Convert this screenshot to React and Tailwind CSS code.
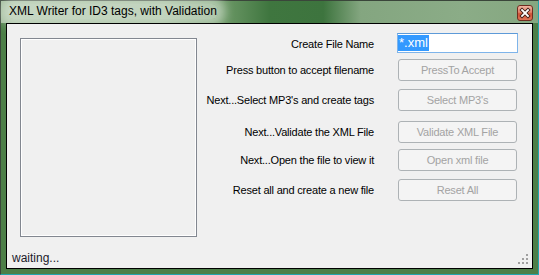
export default function App() {
  const rows = [
    { label: "Press button to accept filename", btn: "PressTo Accept", mt: "mt-[6px]" },
    { label: "Next...Select MP3's and create tags", btn: "Select MP3's", mt: "mt-[8px]" },
    { label: "Next...Validate the XML File", btn: "Validate XML File", mt: "mt-[10px]" },
    { label: "Next...Open the file to view it", btn: "Open xml file", mt: "mt-[6px]" },
    { label: "Reset all and create a new file", btn: "Reset All", mt: "mt-[8px]" },
  ];
  return (
    <div className="w-[539px] h-[275px] flex flex-col bg-[#4d7f48] border border-t-[#3a463a] border-l-[#3a463a] border-r-[#22a4ae] border-b-[#22a4ae] font-['Liberation_Sans',Arial,sans-serif]">
      <div className="h-[22px] flex items-start justify-between pl-[7px] pr-[5px] bg-[linear-gradient(to_right,#a3bd9d_0%,#98b592_30%,#6f9a69_41%,#3f763f_50%,#3d743e_60%,#84a680_67%,#8bac87_86%,#85a780_100%)]">
        <span className="mt-[3px] text-[12px] leading-[15px] text-black px-[1px] bg-[rgba(228,236,226,0.55)] shadow-[0_0_10px_7px_rgba(228,236,226,0.55)] rounded-[6px]">
          XML Writer for ID3 tags, with Validation
        </span>
        <svg width="16" height="16" viewBox="0 0 16 16" className="mt-[4px]">
          <defs>
            <linearGradient id="cg" x1="0" y1="0" x2="0" y2="1">
              <stop offset="0" stopColor="#f0b9a6" />
              <stop offset="0.45" stopColor="#e08068" />
              <stop offset="0.55" stopColor="#cf5234" />
              <stop offset="1" stopColor="#e0765a" />
            </linearGradient>
          </defs>
          <rect x="0.5" y="0.5" width="15" height="15" rx="2.5" fill="url(#cg)" stroke="#6e2d20" />
          <path d="M5 5 L11 11 M11 5 L5 11" stroke="#3a1a14" strokeWidth="3.6" strokeLinecap="square" />
          <path d="M5 5 L11 11 M11 5 L5 11" stroke="#ffffff" strokeWidth="1.8" strokeLinecap="square" />
        </svg>
      </div>
      <div className="flex-1 px-[5px] pb-[5px] flex">
        <div className="flex-1 border border-black bg-[#f0f0f0] flex flex-col">
          <div className="flex flex-1">
            <div className="ml-[13px] mt-[14px] w-[177px] h-[199px] border border-[#828790] shadow-[inset_0_0_0_1px_#ffffff] bg-[#f0f0f0]" />
            <div className="flex flex-col">
              <div className="mt-[9px] h-[20px] flex items-center">
                <div className="w-[177px] text-right text-[11px] tracking-[-0.2px] text-black leading-none pt-[3px]">
                  Create File Name
                </div>
                <div className="ml-[23px] w-[121px] h-[20px] border border-[#7eb4ea] border-t-[#5d9ad8] bg-white flex items-center">
                  <span className="bg-[#3399ff] text-white text-[13px] leading-[16px] px-[1px]">*.xml</span>
                </div>
              </div>
              {rows.map((r) => (
                <div key={r.btn} className={`${r.mt} h-[22px] flex items-center`}>
                  <div className="w-[177px] text-right text-[11px] tracking-[-0.2px] text-black leading-none">
                    {r.label}
                  </div>
                  <div className="ml-[24px] w-[119px] h-[22px] rounded-[3px] border border-[#adb2b5] bg-[#f4f4f4] flex items-center justify-center text-[11px] tracking-[-0.2px] text-[#a3a3a3] leading-none">
                    {r.btn}
                  </div>
                </div>
              ))}
            </div>
          </div>
          <div className="h-[22px] flex items-center justify-between">
            <span className="pl-[5px] text-[12px] leading-none text-[#1a1a2a] pt-[1px]">waiting...</span>
            <svg width="10" height="10" viewBox="0 0 10 10" className="self-end mb-[4px] mr-[4px]">
              <rect x="8" y="0" width="2" height="2" fill="#a0a0a0" />
              <rect x="4" y="4" width="2" height="2" fill="#a0a0a0" />
              <rect x="8" y="4" width="2" height="2" fill="#a0a0a0" />
              <rect x="0" y="8" width="2" height="2" fill="#a0a0a0" />
              <rect x="4" y="8" width="2" height="2" fill="#a0a0a0" />
              <rect x="8" y="8" width="2" height="2" fill="#a0a0a0" />
            </svg>
          </div>
        </div>
      </div>
    </div>
  );
}
